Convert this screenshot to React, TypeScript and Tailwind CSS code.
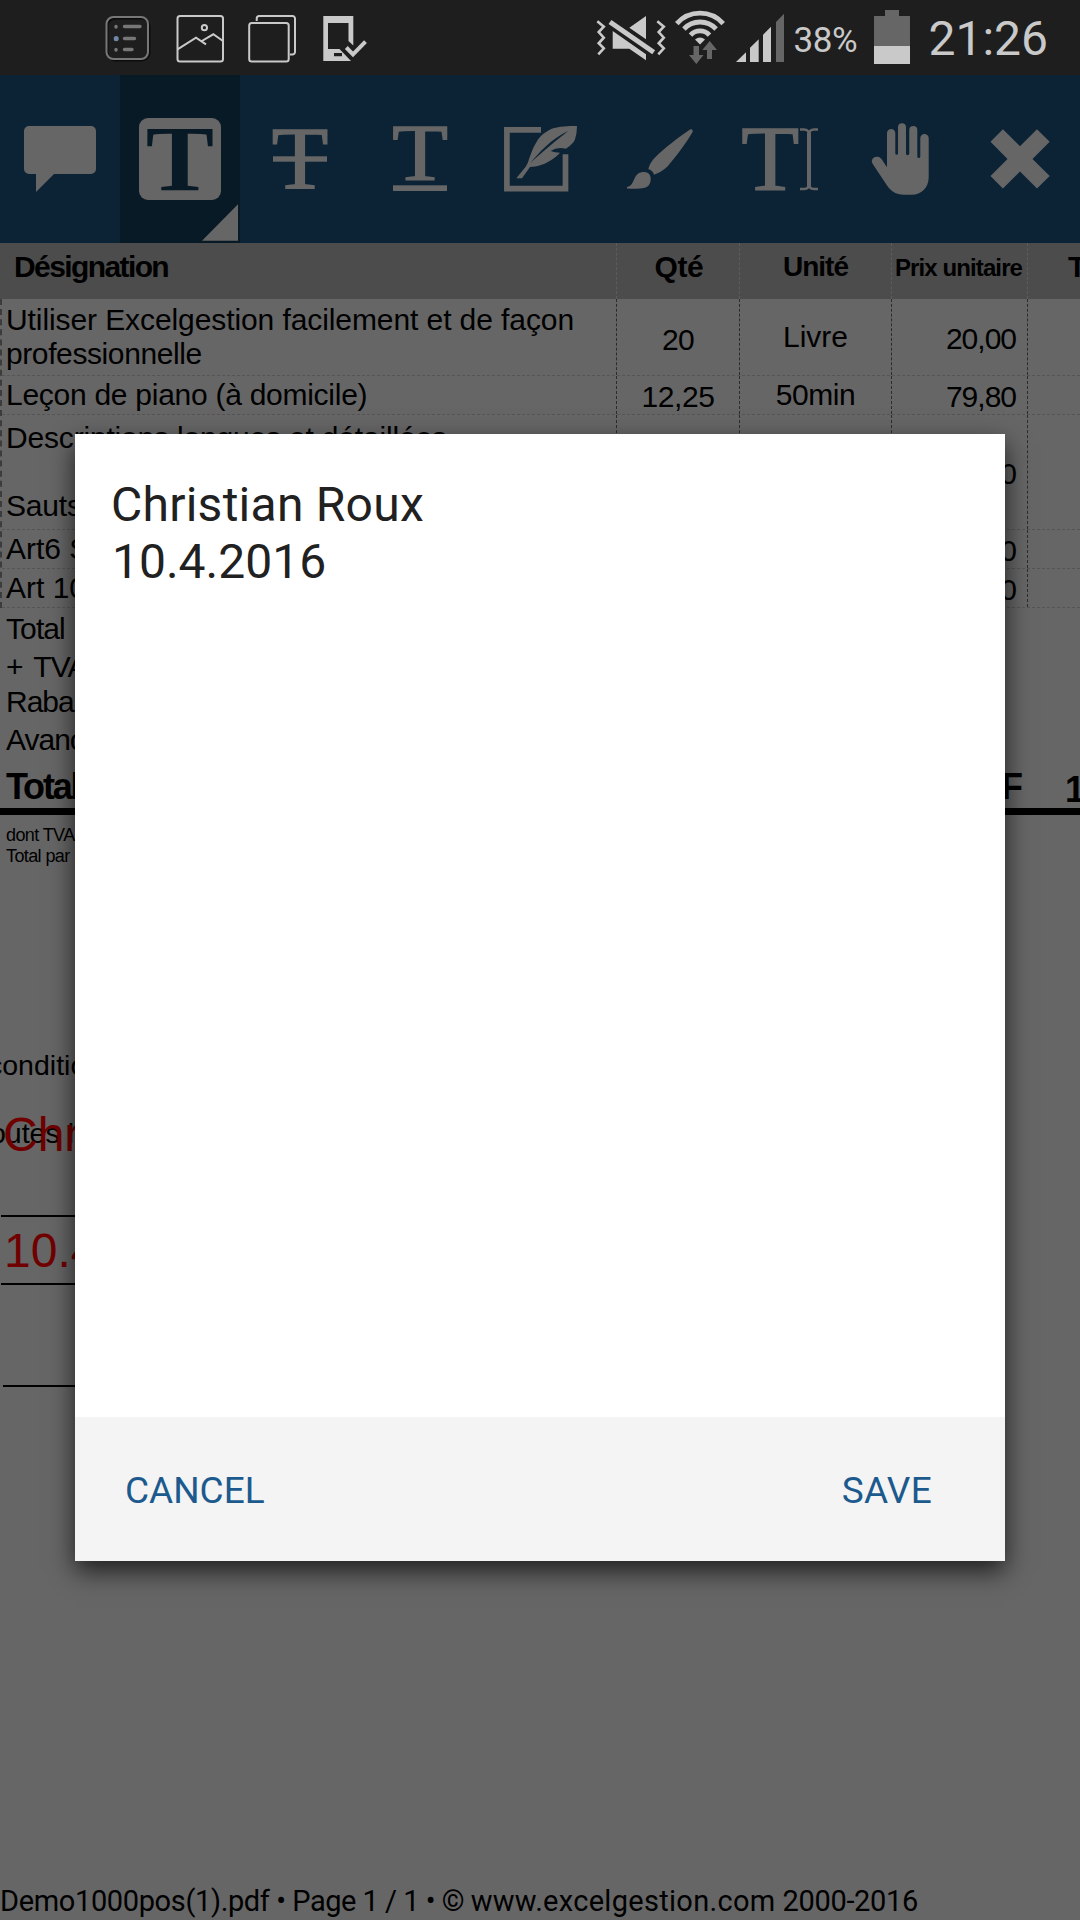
import type { ReactNode } from "react";

const LIGHT = "#c9c9c9";
const DIM = "#666666";

// ---------- Status bar ----------

function StatusIcon({ width, children }: { width: number; children: ReactNode }) {
  return (
    <svg width={width} height={75} viewBox={`0 0 ${width} 75`} fill="none" className="shrink-0">
      {children}
    </svg>
  );
}

function StatusBar() {
  return (
    <header className="flex h-[75px] justify-between bg-[#1e1e1e] font-['Roboto',sans-serif] text-[#c9c9c9]">
      <div className="flex gap-6 pl-[104px]">
        <StatusIcon width={48}>
          <rect x="3.5" y="18.5" width="42" height="42" rx="8" stroke="#0c0c0c" strokeWidth="2" />
          <rect x="2.5" y="17" width="41.5" height="42" rx="7" stroke="#777" strokeWidth="2" />
          <g stroke="#777" strokeWidth="3.4" strokeLinecap="round">
            <path d="M20.5 26.5H36M20.5 38.5H30.5M20.5 49.5H28" />
            <path d="M12 27v-.5M12 50v-.5" />
            <path d="M12.2 38.6v.1" stroke="#6f87a8" strokeWidth="5" />
          </g>
        </StatusIcon>
        <StatusIcon width={48}>
          <g stroke={LIGHT} strokeWidth="2">
            <rect x="1.5" y="16" width="45.5" height="45.5" rx="2.5" />
            <circle cx="28.4" cy="27.7" r="2.6" />
            <path d="M1.5 49.3 20 37.7 30 44.3M25 41.5 37.3 34.3 47 41" />
          </g>
        </StatusIcon>
        <StatusIcon width={48}>
          <g stroke={LIGHT} strokeWidth="2">
            <rect x="1.2" y="23" width="39.5" height="38.6" rx="2.5" />
            <path d="M8.7 21V18.5a2.5 2.5 0 0 1 2.5-2.5H44.5a2.5 2.5 0 0 1 2.5 2.5V52a2.5 2.5 0 0 1-2.5 2.5H42" />
          </g>
        </StatusIcon>
        <StatusIcon width={48}>
          <path
            fill={LIGHT}
            fillRule="evenodd"
            d="M3.3 16H33.3V45.5L28.5 41V23H8V49H19.5L31 61H3.3ZM14 53V56.2H22V53Z"
          />
          <path d="M26.3 47.5 33 54.3 45.5 41.7" stroke={LIGHT} strokeWidth="4" />
        </StatusIcon>
      </div>

      <div className="flex pr-[32px]">
        <StatusIcon width={80}>
          <g stroke={LIGHT} strokeWidth="2.6">
            <path d="M5.3 21.3 11.8 26.7 6.7 32 11.8 37.7 6.7 43.3 11.8 48.3 6.3 54.3" />
            <path d="M65.3 21.3 71.8 26.7 66.7 32 71.8 37.7 66.7 43.3 71.8 48.3 66.3 54.3" />
          </g>
          <path d="M18 22 61.7 52.3" stroke={LIGHT} strokeWidth="5" />
          <path
            fill={LIGHT}
            d="M37.3 27.7 54 16V39.3ZM20.7 31 54 54.3V60.3L37.3 48.7H20.7Z"
          />
        </StatusIcon>
        <StatusIcon width={64}>
          <g stroke={LIGHT} strokeWidth="4.8">
            <path d="M4.8 23.6A31 31 0 0 1 51.2 23.6" />
            <path d="M11.9 29A22 22 0 0 1 44.1 29" />
            <path d="M18.5 35.1A13 13 0 0 1 37.5 35.1" />
          </g>
          <path fill={LIGHT} d="M23 39.6Q28 35.6 33 39.6L28 44.5Z" />
          <g fill={DIM}>
            <path d="M21.5 46H27V55H31.5L24.3 64 17 55H21.5Z" />
            <path d="M37.7 41 45 50H40V59H35V50H30.3Z" />
          </g>
        </StatusIcon>
        <StatusIcon width={57}>
          <g fill={LIGHT}>
            <path d="M0 62 10 52.3V62Z" />
            <path d="M14 47.7 22.7 39.3V62H14Z" />
            <path d="M27 34.7 35 26.7V62H27Z" />
          </g>
          <path fill={DIM} d="M40 22 48 13.7V62H40Z" />
        </StatusIcon>
        <span className="w-[81px] pt-[21px] text-[35px] leading-[40px] tracking-[-0.4px]">38%</span>
        <StatusIcon width={36}>
          <path fill={DIM} d="M11 10H25V16H36V46H0V16H11Z" />
          <path fill={LIGHT} d="M0 46H36V64H0Z" />
        </StatusIcon>
        <span className="pl-[18px] pt-[14px] text-[48px] leading-[50px]">21:26</span>
      </div>
    </header>
  );
}

// ---------- Annotation toolbar ----------

function LetterT({
  x,
  baseline,
  size,
  stretch = 1,
  bold = false,
  color = DIM,
}: {
  x: number;
  baseline: number;
  size: number;
  stretch?: number;
  bold?: boolean;
  color?: string;
}) {
  return (
    <text
      transform={`translate(${x} ${baseline}) scale(${stretch} 1)`}
      textAnchor="middle"
      fontFamily="Liberation Serif, serif"
      fontSize={size}
      fontWeight={bold ? 700 : 400}
      fill={color}
      stroke={bold ? "none" : color}
      strokeWidth={bold ? 0 : 1.4}
    >
      T
    </text>
  );
}

const tools: { name: string; active?: boolean; icon: ReactNode }[] = [
  {
    name: "Comment",
    icon: <path d="M29 51H91a5 5 0 0 1 5 5V94a5 5 0 0 1-5 5H54L36 117V99H29a5 5 0 0 1-5-5V56a5 5 0 0 1 5-5Z" />,
  },
  {
    name: "Highlight",
    active: true,
    icon: (
      <>
        <rect x="19" y="43" width="82" height="82" rx="9" />
        <LetterT x={60} baseline={115} size={94} stretch={1.09} bold color="#091a27" />
        <path d="M118 129.3V165.7H82Z" />
      </>
    ),
  },
  {
    name: "Strikethrough",
    icon: (
      <>
        <LetterT x={60} baseline={113.3} size={89} stretch={1.04} />
        <rect x="33" y="81.3" width="54" height="5.4" />
      </>
    ),
  },
  {
    name: "Underline",
    icon: (
      <>
        <LetterT x={60} baseline={105} size={80} stretch={1.14} />
        <rect x="33" y="110.3" width="54" height="5.7" />
      </>
    ),
  },
  {
    name: "Sign",
    icon: (
      <>
        <path d="M61 54.8H26.9V113.6H85.5V79.3" fill="none" stroke={DIM} strokeWidth="5.7" />
        <path d="M97 51C88 51 79 51.5 73.3 53.3C66 56 60 61 56.7 66.7C52.5 73.5 51 79 49.3 83.3Q48 88.5 45.7 91.7L36.3 103.3H42L50 92C57 91.5 64 89.5 68.3 86.7Q76 82.5 80 77.7Q75 77.5 70.7 76Q77 71.5 86 73.7Q93 69 95 64.5Q97 58 97 51Z" />
        <path d="M50.5 88C58 78.5 71 64 88.3 55.7C77 65 61 77.5 50.5 88Z" fill="#0c2336" />
      </>
    ),
  },
  {
    name: "Draw",
    icon: (
      <>
        <path d="M90 54.5Q93 53.6 92.7 56.8C86 68.5 76 81.5 67.5 91.5Q61 97.5 54 99.7Q53 95.5 48.3 94Q50 87.5 55 82.5C64 73.5 78 62.5 90 54.5Z" />
        <path d="M44 97C48.5 97 51 100 50.7 104.5C50.5 109.5 48 112 44.5 112.8C39 114.2 32 114 27 113.4C26.5 112.4 27.2 112 28.5 111.6C32 110 32.5 107.5 34.5 103.5C36.5 99 39.5 97 44 97Z" />
      </>
    ),
  },
  {
    name: "Text",
    icon: (
      <>
        <LetterT x={50.3} baseline={114.5} size={93} stretch={1.02} />
        <path
          d="M80 54.5H84Q89 54.5 89 60V108.5Q89 114 84 114H80M98 54.5H94Q89 54.5 89 60M89 108.5Q89 114 94 114H98"
          fill="none"
          stroke={DIM}
          strokeWidth="2.4"
        />
        <path d="M87 58H91V111H87Z" />
      </>
    ),
  },
  {
    name: "Pan",
    icon: (
      <path d="M47 92.3V58.2a4.15 4.15 0 0 1 8.3 0V78.5a1.35 1.35 0 0 0 2.7 0V52.3a4 4 0 0 1 8 0V78.5a1.65 1.65 0 0 0 3.3 0V55a4 4 0 0 1 8 0V81.5a1.5 1.5 0 0 0 3 0V63.2a4.2 4.2 0 0 1 8.4 0V102C88.7 113 81 119.8 72 119.8H64C56 119.8 50 115.5 46.7 110L32.6 88.8C29.5 83.5 37 79 41.5 84Z" />
    ),
  },
  {
    name: "Close",
    icon: (
      <path d="M42.9 54.3 60 71.3 77 54.3 89.7 66.7 72.5 84 89.7 101 77 113.5 60 96.5 42.9 113.5 30.5 101 47.5 84 30.5 66.7Z" />
    ),
  },
];

function Toolbar() {
  return (
    <nav className="flex h-[168px] bg-[#0c2336]">
      {tools.map((tool) => (
        <button
          key={tool.name}
          aria-label={tool.name}
          className={tool.active ? "w-[120px] bg-[#091a27]" : "w-[120px]"}
        >
          <svg width="120" height="168" viewBox="0 0 120 168" fill={DIM}>
            {tool.icon}
          </svg>
        </button>
      ))}
    </nav>
  );
}

// ---------- Invoice page ----------

function Row({ height, children }: { height: string; children: ReactNode }) {
  return (
    <div
      className={`${height} grid grid-cols-[615px_123px_152px_136px_52px] border-b border-dashed border-[#555] text-[30px] leading-[30px]`}
    >
      {children}
    </div>
  );
}

function Cell({ className = "", children }: { className?: string; children?: ReactNode }) {
  return (
    <div className={`border-r border-dashed border-[#2c2c2c] whitespace-nowrap ${className}`}>
      {children}
    </div>
  );
}

function InvoiceTable() {
  return (
    <section>
      <div className="grid h-[56px] grid-cols-[617px_123px_152px_136px_52px] bg-[#4c4c4c] text-[30px] font-bold leading-[30px]">
        <div className="border-r border-dashed border-[#5c5c5c] pl-[14px] pt-[9px] tracking-[-1.6px]">Désignation</div>
        <div className="border-r border-dashed border-[#5c5c5c] pl-[2px] pt-[9px] text-center tracking-[-0.4px]">Qté</div>
        <div className="border-r border-dashed border-[#5c5c5c] pt-[9px] text-center text-[28px] tracking-[-1px]">Unité</div>
        <div className="whitespace-nowrap border-r border-dashed border-[#5c5c5c] pl-[3px] pt-[10px] text-[24px] tracking-[-0.9px]">
          Prix unitaire
        </div>
        <div className="overflow-hidden whitespace-nowrap pl-[40px] pt-[9px]">Total</div>
      </div>

      <div className="border-l-2 border-dashed border-[#3c3c3c]">
        <Row height="h-[77px]">
          <Cell className="pl-[4px] pt-[4px] leading-[34px]">
            <p className="tracking-[-0.09px]">Utiliser Excelgestion facilement et de façon</p>
            <p className="tracking-[-0.4px]">professionnelle</p>
          </Cell>
          <Cell className="pt-[26px] text-center tracking-[-0.8px]">20</Cell>
          <Cell className="pt-[23px] text-center">Livre</Cell>
          <Cell className="pr-[11px] pt-[25px] text-right tracking-[-1px]">20,00</Cell>
        </Row>
        <Row height="h-[39px]">
          <Cell className="pl-[4px] pt-[4px] tracking-[-0.27px]">Leçon de piano (à domicile)</Cell>
          <Cell className="pt-[6px] text-center tracking-[-0.4px]">12,25</Cell>
          <Cell className="pt-[4px] text-center tracking-[-0.4px]">50min</Cell>
          <Cell className="pr-[11px] pt-[6px] text-right tracking-[-1px]">79,80</Cell>
        </Row>
        <Row height="h-[115px]">
          <Cell className="flex flex-col gap-[38px] pl-[4px] pt-[8px] tracking-[-0.18px]">
            <p>Descriptions longues et détaillées</p>
            <p>Sauts de ligne</p>
          </Cell>
          <Cell />
          <Cell />
          <Cell className="pr-[11px] pt-[44px] text-right tracking-[-1px]">10,00</Cell>
        </Row>
        <Row height="h-[39px]">
          <Cell className="pl-[4px] pt-[4px]">Art6 S</Cell>
          <Cell />
          <Cell />
          <Cell className="pr-[11px] pt-[6px] text-right tracking-[-1px]">10,00</Cell>
        </Row>
        <Row height="h-[39px]">
          <Cell className="pl-[4px] pt-[4px]">Art 10</Cell>
          <Cell />
          <Cell />
          <Cell className="pr-[11px] pt-[6px] text-right tracking-[-1px]">10,00</Cell>
        </Row>
      </div>
    </section>
  );
}

function Totals() {
  return (
    <section className="whitespace-nowrap">
      <div className="pl-[6px] pt-[2px] text-[30px] leading-[38px] tracking-[-1px]">
        <p className="tracking-[-0.9px]">Total</p>
        <p className="[word-spacing:4px]">+ TVA</p>
        <p className="-mt-[3px]">Rabais</p>
        <p>Avance</p>
      </div>
      <div className="flex h-[49px] items-start justify-between pt-[6px] text-[36px] font-bold leading-[44px]">
        <span className="pl-[6px] tracking-[-2.2px]">Total</span>
        <span className="flex">
          <span className="pr-[42px]">CHF</span>
          <span className="w-[15px] overflow-hidden pt-[3px]">1</span>
        </span>
      </div>
      <div className="h-[7px] bg-black" />
      <div className="pl-[6px] pt-[10px] text-[18px] leading-[20.7px] tracking-[-0.6px]">
        <p>dont TVA</p>
        <p>Total par</p>
      </div>
    </section>
  );
}

function Conditions() {
  return (
    <section className="flex flex-col whitespace-nowrap pt-[183.6px]">
      <p className="-ml-[12px] text-[28.5px] leading-[30px]">conditions</p>
      <div className="grid pt-[37px]">
        <p className="-ml-[10px] pt-[1px] text-[28.5px] leading-[30px] [grid-area:1/1]">outes les</p>
        <p className="pl-[3px] text-[48px] leading-[36px] text-[#700000] [grid-area:1/1]">Christian</p>
      </div>
      <div className="ml-px mt-[62px] h-[2px] w-[400px] bg-black" />
      <p className="pl-[4px] pt-[7px] text-[48px] leading-[54px] text-[#700000]">10.4.2016</p>
      <div className="ml-px mt-[5px] h-[2px] w-[400px] bg-black" />
      <div className="ml-[3px] mt-[100px] h-[2px] w-[400px] bg-black" />
    </section>
  );
}

// ---------- Note dialog ----------

function NoteDialog() {
  return (
    <div
      role="dialog"
      className="absolute left-[75px] top-[434px] flex h-[1127px] w-[930px] flex-col bg-white font-['Roboto',sans-serif] shadow-[0_10px_24px_rgba(0,0,0,0.7)]"
    >
      <div className="flex-1 pl-[36px] pt-[42px] text-[48px] leading-[57px] text-[#212121]">
        <p className="tracking-[0.25px]">Christian Roux</p>
        <p className="pl-px">10.4.2016</p>
      </div>
      <div className="flex h-[144px] items-center justify-between bg-[#f4f4f4] pl-[50px] pr-[73px] pt-[3px] text-[37px] leading-[40px] text-[#1c5a8e]">
        <button>CANCEL</button>
        <button className="tracking-[0.3px]">SAVE</button>
      </div>
    </div>
  );
}

export default function App() {
  return (
    <div className="relative flex h-[1920px] w-[1080px] flex-col overflow-hidden bg-[#666] font-['Liberation_Sans',Arial,sans-serif] text-black">
      <StatusBar />
      <Toolbar />
      <main className="flex-1">
        <InvoiceTable />
        <Totals />
        <Conditions />
      </main>
      <footer className="h-[39px] whitespace-nowrap font-['Roboto',sans-serif] text-[29px] leading-[40px]">
        <span className="tracking-[-0.36px]">Demo1000pos(1).pdf</span>
        <span className="tracking-[-0.5px]"> • Page 1 / 1 • © </span>
        <span className="tracking-[0.3px]">www.excelgestion.com</span>
        <span className="tracking-[-0.3px]"> 2000-2016</span>
      </footer>
      <NoteDialog />
    </div>
  );
}
